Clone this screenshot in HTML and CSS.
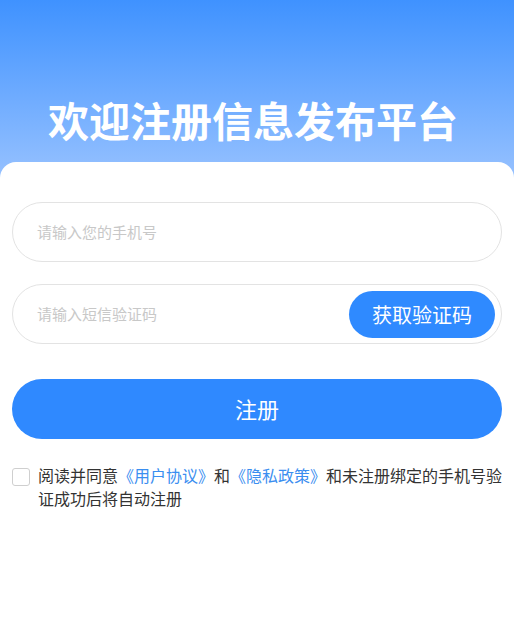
FILE: index.html
```html
<!DOCTYPE html>
<html lang="zh-CN">
<head>
<meta charset="utf-8">
<link rel="stylesheet" href="styles.css">
</head>
<body>
<div class="page">
  <header class="hero">
    <h1 class="title">欢迎注册信息发布平台</h1>
  </header>
  <main class="card">
    <div class="field">
      <span class="placeholder">请输入您的手机号</span>
    </div>
    <div class="field field-code">
      <span class="placeholder">请输入短信验证码</span>
      <button class="code-btn">获取验证码</button>
    </div>
    <button class="submit">注册</button>
    <div class="agree">
      <span class="check"></span>
      <p class="agree-text">阅读并同意<a class="link"><span class="bl">《</span>用户协议<span class="br">》</span></a>和<a class="link"><span class="bl">《</span>隐私政策<span class="br">》</span></a>和未注册绑定的手机号验证成功后将自动注册</p>
    </div>
  </main>
</div>
</body>
</html>
```
FILE: styles.css
```css
* { box-sizing: border-box; }
html, body { margin: 0; padding: 0; background: #fff; }
body { font-family: "Noto Sans CJK SC", "Noto Sans", sans-serif; }
.page { width: 514px; min-height: 641px; background: #fff; }
.hero {
  height: 178px;
  background: linear-gradient(180deg, #3f92ff 0%, #96c1ff 100%);
  display: flex;
  justify-content: center;
  padding-top: 88px;
}
.title {
  margin: 0 8px 0 0;
  color: #fff;
  font-size: 41px;
  font-weight: 700;
  line-height: 62px;
}
.card {
  margin-top: -16px;
  background: #fff;
  border-radius: 16px 16px 0 0;
  padding: 40px 12px 0;
  position: relative;
}
.field {
  height: 60px;
  border: 1px solid #e3e3e3;
  border-radius: 30px;
  display: flex;
  align-items: center;
  padding: 0 6px 2px 24px;
  margin-bottom: 22px;
}
.placeholder { color: #c8c8c8; font-size: 15px; flex: 1; }
.code-btn {
  height: 47px;
  width: 146px;
  border: none;
  border-radius: 24px;
  background: #2f8aff;
  color: #fff;
  font-family: inherit;
  font-size: 20px;
  padding: 0;
  margin-top: 2px;
}
.submit {
  display: block;
  width: 100%;
  height: 60px;
  border: none;
  border-radius: 30px;
  background: #2f89ff;
  color: #fff;
  font-family: inherit;
  font-size: 22px;
  margin-top: 35px;
  padding: 0 0 2px;
}
.agree {
  display: flex;
  align-items: flex-start;
  gap: 8px;
  margin-top: 25px;
  margin-right: -2px;
}
.check {
  flex: none;
  width: 18px;
  height: 18px;
  border: 1.5px solid #cfcfcf;
  border-radius: 3px;
  margin-top: 4px;
}
.agree-text {
  margin: 0;
  font-size: 16px;
  line-height: 23px;
  color: #333;
}
.link { color: #3a8ef0; }
.bl, .br { display: inline-block; width: 1em; }
.bl { text-align: right; }
.br { text-align: left; }
```
